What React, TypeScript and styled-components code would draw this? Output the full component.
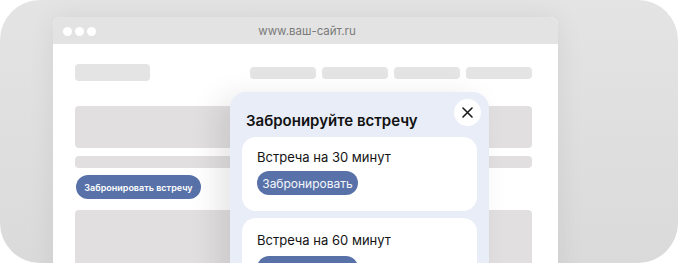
import React from 'react'
import { styled, createGlobalStyle } from 'styled-components'

const GlobalStyle = createGlobalStyle`
  html, body {
    margin: 0;
    padding: 0;
    background: #ffffff;
    font-family: Inter, "Noto Sans", sans-serif;
  }
`

const navItems = [0, 1, 2, 3]

const slots = [
  { id: 1, title: 'Встреча на 30 минут' },
  { id: 2, title: 'Встреча на 60 минут' },
]

export default function App() {
  return (
    <>
      <GlobalStyle />
      <Styled.frame>
        <Styled.browser>
          <Styled.titleBar>
            <Styled.dots>
              <Styled.dot />
              <Styled.dot />
              <Styled.dot />
            </Styled.dots>
            <Styled.url>www.ваш-сайт.ru</Styled.url>
          </Styled.titleBar>

          <Styled.page>
            <Styled.header>
              <Styled.logo />
              <Styled.nav>
                {navItems.map((i) => (
                  <Styled.navItem key={i} />
                ))}
              </Styled.nav>
            </Styled.header>
            <Styled.block $height={42} />
            <Styled.line />
            <Styled.siteBtn>Забронировать встречу</Styled.siteBtn>
            <Styled.block $height={60} />
          </Styled.page>

          <Styled.modal>
            <Styled.modalHead>
              <Styled.modalTitle>Забронируйте встречу</Styled.modalTitle>
              <Styled.close aria-label="Закрыть">
                <svg width="11" height="11" viewBox="0 0 11 11" fill="none">
                  <path d="M1 1L10 10M10 1L1 10" stroke="#1a1a1a" strokeWidth="1.6" strokeLinecap="round" />
                </svg>
              </Styled.close>
            </Styled.modalHead>
            <Styled.slotList>
              {slots.map((s) => (
                <Styled.slot key={s.id}>
                  <Styled.slotTitle>{s.title}</Styled.slotTitle>
                  <Styled.bookBtn>Забронировать</Styled.bookBtn>
                </Styled.slot>
              ))}
            </Styled.slotList>
          </Styled.modal>
        </Styled.browser>
      </Styled.frame>
    </>
  )
}

const Styled = {
  frame: styled.div`
    width: 678px;
    height: 263px;
    box-sizing: border-box;
    padding: 17px 0 0 53px;
    border-radius: 40px;
    overflow: hidden;
    background: linear-gradient(180deg, #e4e4e4 0%, #dadada 100%);
  `,
  browser: styled.div`
    position: relative;
    width: 505px;
    height: 320px;
    border-radius: 8px 8px 0 0;
    background: #ffffff;
    box-shadow: 0 0 28px rgba(0, 0, 0, 0.07);
    overflow: hidden;
  `,
  titleBar: styled.div`
    position: relative;
    height: 27px;
    background: #e3e3e3;
    display: flex;
    align-items: center;
    justify-content: center;
  `,
  dots: styled.div`
    position: absolute;
    left: 10px;
    top: 10px;
    display: flex;
    gap: 3px;
  `,
  dot: styled.span`
    width: 9px;
    height: 9px;
    border-radius: 50%;
    background: #ffffff;
  `,
  url: styled.span`
    font-size: 11.5px;
    color: #7a7a7a;
    margin-left: 3px;
  `,
  page: styled.div`
    padding: 20px 26px 0 22px;
    display: flex;
    flex-direction: column;
    align-items: flex-start;
  `,
  header: styled.div`
    width: 100%;
    display: flex;
    justify-content: space-between;
    align-items: center;
    margin-bottom: 25px;
  `,
  logo: styled.div`
    width: 75px;
    height: 17px;
    border-radius: 4px;
    background: #e4e4e4;
  `,
  nav: styled.div`
    display: flex;
    gap: 6px;
  `,
  navItem: styled.div`
    width: 66px;
    height: 12px;
    border-radius: 4px;
    background: #e4e4e4;
  `,
  block: styled.div<{ $height: number }>`
    width: 100%;
    height: ${(p) => p.$height}px;
    border-radius: 4px;
    background: #e1dfe0;
    margin-bottom: 8px;
  `,
  line: styled.div`
    width: 100%;
    height: 12px;
    border-radius: 4px;
    background: #e1dfe0;
    margin-bottom: 7px;
  `,
  siteBtn: styled.button`
    height: 24px;
    width: 125px;
    margin: 0 0 11px 1px;
    padding: 0;
    border: none;
    border-radius: 12px;
    background: #5872a9;
    color: #ffffff;
    font-family: Inter, "Noto Sans", sans-serif;
    font-size: 9px;
    font-weight: 600;
    cursor: pointer;
  `,
  modal: styled.div`
    position: absolute;
    left: 177px;
    top: 75px;
    width: 259px;
    height: 260px;
    box-sizing: border-box;
    padding: 7px 8px 0 12px;
    border-radius: 16px;
    background: #e8edf7;
    box-shadow: -12px 6px 30px rgba(0, 0, 0, 0.1);
  `,
  modalHead: styled.div`
    display: flex;
    justify-content: space-between;
    align-items: flex-start;
    margin-bottom: 7px;
  `,
  modalTitle: styled.h2`
    margin: 13px 0 0 4px;
    font-size: 15px;
    line-height: 18px;
    font-weight: 600;
    color: #111111;
  `,
  close: styled.button`
    width: 27px;
    height: 27px;
    padding: 0;
    border: none;
    border-radius: 50%;
    background: #ffffff;
    display: flex;
    align-items: center;
    justify-content: center;
    cursor: pointer;
  `,
  slotList: styled.div`
    width: 235px;
    display: flex;
    flex-direction: column;
    gap: 7px;
  `,
  slot: styled.div`
    height: 74px;
    box-sizing: border-box;
    padding: 12px 15px 0;
    border-radius: 14px;
    background: #ffffff;
    display: flex;
    flex-direction: column;
    align-items: flex-start;
    gap: 6px;

    & + & {
      padding-top: 14px;
      gap: 8px;
    }
  `,
  slotTitle: styled.div`
    font-size: 13px;
    line-height: 16px;
    color: #141414;
  `,
  bookBtn: styled.button`
    height: 24px;
    width: 101px;
    padding: 0;
    border: none;
    border-radius: 12px;
    background: #5872a9;
    color: #f4f6fb;
    font-family: Inter, "Noto Sans", sans-serif;
    font-size: 12px;
    cursor: pointer;
  `,
}
